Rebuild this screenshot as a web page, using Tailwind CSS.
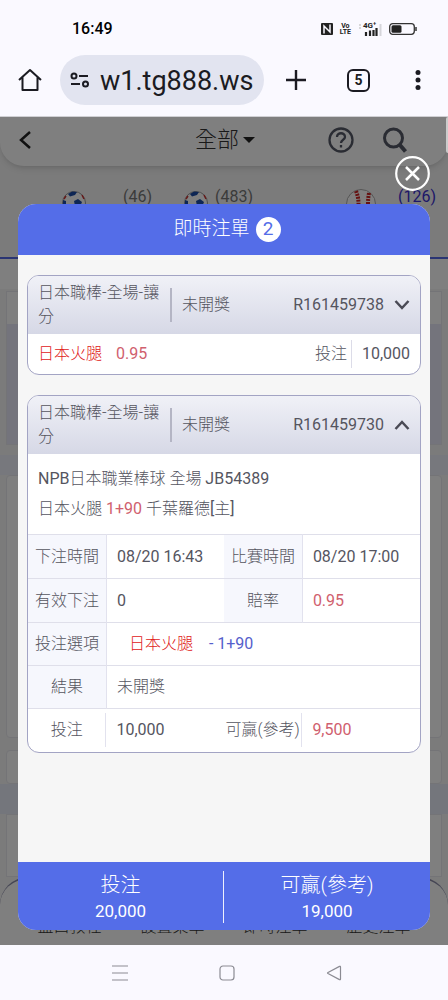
<!DOCTYPE html>
<html lang="zh-Hant">
<head>
  <meta charset="UTF-8">
  <meta name="viewport" content="width=device-width, initial-scale=1.0">
  <title>即時注單</title>
  <script src="https://cdn.jsdelivr.net/npm/@tailwindcss/browser@4"></script>
</head>
<body class="flex flex-col min-h-screen bg-[#faf9ff] text-[#55555f] text-base font-['Roboto','Noto_Sans_CJK_TC',sans-serif]">

  <!-- Status bar -->
  <div class="flex items-center justify-between h-14 pt-0.5 pl-[72px] pr-[31px] text-black">
    <span class="text-base font-medium">16:49</span>
    <div class="flex items-center gap-[7px]">
      <svg class="w-3 h-3" viewBox="0 0 12 12"><rect width="12" height="12" rx="1" fill="#222"/><path d="M3 10.500V3l6 6V1.500" fill="none" stroke="#faf9ff" stroke-width="1.500"/></svg>
      <span class="text-[7px] leading-[6px] font-bold text-center text-[#222]">Vo<br>LTE</span>
      <svg class="w-6 h-4" viewBox="0 0 24 16">
        <path d="M1 4h2M1 7h2" stroke="#ccc" stroke-width="1.500"/>
        <text x="5" y="7" font-size="8" font-weight="700" fill="#222">4G⁺</text>
        <path d="M8 15v-4M12 15V9.500M15.500 15V9M18.500 15V7" stroke="#222" stroke-width="2.200"/>
        <path d="M22.500 15V3" stroke="#d5d5da" stroke-width="2"/>
      </svg>
      <svg class="w-7 h-3" viewBox="0 0 28 12"><rect x=".7" y=".7" width="24.600" height="10.600" rx="3" fill="none" stroke="#333" stroke-width="1.300"/><rect x="2.500" y="2.300" width="10" height="7.400" rx="1.500" fill="#222"/><path d="M27 4v4" stroke="#333" stroke-width="1.500"/></svg>
    </div>
  </div>

  <!-- Browser bar -->
  <div class="flex items-center h-[60px] pb-3 px-[18px] text-[#1b1b22]">
    <button aria-label="Home" class="w-6 h-6 shrink-0">
      <svg viewBox="0 0 24 24" fill="none" stroke="currentColor" stroke-width="2"><path d="M1 12 12 2l11 10M4.500 9.500V22h15V9.500" stroke-linejoin="round"/></svg>
    </button>
    <div class="flex items-center flex-1 min-w-0 h-[50px] ml-[18px] pl-2.5 pr-1 gap-2.5 rounded-full bg-[#e2e4f0]">
      <svg class="w-5 h-5 shrink-0" viewBox="0 0 20 20" fill="none" stroke="currentColor" stroke-width="2"><circle cx="4" cy="6" r="2.500"/><path d="M9 6h9M1 14h9"/><circle cx="15.500" cy="14" r="2.500"/></svg>
      <input aria-label="Address" value="w1.tg888.ws" class="w-full min-w-0 pt-0.5 text-[27px] outline-none">
    </div>
    <button aria-label="New tab" class="ml-5 w-6 h-6 shrink-0">
      <svg viewBox="0 0 24 24" stroke="currentColor" stroke-width="2.400"><path d="M12 2v20M2 12h20"/></svg>
    </button>
    <button class="ml-[39px] w-[23px] h-[23px] shrink-0 rounded-md border-2 border-current text-sm leading-none font-bold">5</button>
    <button aria-label="Menu" class="ml-9 w-6 h-6 shrink-0">
      <svg viewBox="0 0 24 24" fill="currentColor"><circle cx="12" cy="4.500" r="2.500"/><circle cx="12" cy="12" r="2.500"/><circle cx="12" cy="19.500" r="2.500"/></svg>
    </button>
  </div>

  <main class="relative flex flex-col flex-1 overflow-hidden bg-[#f6f6f6] border-t border-[#d0d0d4]">
    <header class="flex items-center h-[49px] pb-1 pl-[18px] pr-10 bg-white rounded-b-3xl shadow-md">
      <button aria-label="返回" class="w-4 h-6">
        <svg viewBox="0 0 16 24" fill="none" stroke="#222" stroke-width="2.500"><path d="m12 4-9 8 9 8"/></svg>
      </button>
      <button class="flex items-center gap-1 ml-auto font-light text-[22px] text-[#333]">全部
        <svg class="w-3 h-2" viewBox="0 0 12 8"><path d="M0 1h12L6 7z" fill="#222"/></svg>
      </button>
      <button aria-label="說明" class="w-[26px] h-[26px] ml-[73px]">
        <svg viewBox="0 0 26 26" fill="none" stroke="#555866" stroke-width="2.300"><circle cx="13" cy="13" r="11.500"/><path d="M9 10c0-5 8-5 8 0 0 3-4 2.500-4 6M13 18v2.500"/></svg>
      </button>
      <button aria-label="搜尋" class="w-[26px] h-[26px] ml-7">
        <svg viewBox="0 0 26 26" fill="none" stroke="#555866" stroke-width="3"><circle cx="11.500" cy="11" r="9"/><path d="m17.500 17.500 6 7" stroke-width="4"/></svg>
      </button>
    </header>

    <!-- Sport tabs -->
    <div class="flex h-[93px] pl-[62px] pr-3 pt-[19px] border-b-2 border-[#5569e6] text-[#777] text-base">
      <div class="flex items-start gap-[37px]">
        <svg class="w-6 h-6 mt-1.5" viewBox="0 0 24 24"><circle cx="12" cy="12" r="11.500" fill="#fff" stroke="#999"/><path d="m6 3 4-2.500 5 .5-2 3-5 1.500zM12 10l4-2 4 3-2 5-5-1zM1 9l3 1v5l-3-1z" fill="#1d4da8"/><path d="m20 4 2 4M2 8l2-3" stroke="#c33" stroke-width="1.500" fill="none"/></svg>
        <span>(46)</span>
      </div>
      <div class="flex items-start gap-[7px] ml-8">
        <svg class="w-6 h-6 mt-1.5" viewBox="0 0 24 24"><circle cx="12" cy="12" r="11.500" fill="#fff" stroke="#999"/><path d="m6 3 4-2.500 5 .5-2 3-5 1.500zM12 10l4-2 4 3-2 5-5-1zM1 9l3 1v5l-3-1z" fill="#1d4da8"/><path d="m20 4 2 4M2 8l2-3" stroke="#c33" stroke-width="1.500" fill="none"/></svg>
        <span>(483)</span>
      </div>
      <div class="flex items-start gap-[22px] ml-auto text-[#3a2fd0]">
        <svg class="w-[30px] h-[30px] mt-1" viewBox="0 0 30 30"><circle cx="15" cy="15" r="14.500" fill="#fff" stroke="#aaa"/><path d="M10 2q5 12 0 26M23 4q-2 11 0 22" fill="none" stroke="#c22" stroke-width="4" stroke-dasharray="2 1"/></svg>
        <span>(126)</span>
      </div>
    </div>

    <!-- Match list -->
    <div class="h-[30px] bg-white"></div>
    <div class="mx-1.5 mt-0.5 pt-8 bg-white border border-[#e8e8ee]"><div class="h-[120px] bg-[#e9e9f8]"></div></div>
    <div class="h-5 mt-2.5 bg-[#eef0fa]"></div>
    <div class="mx-1.5 h-[263px] bg-white border border-[#e8e8ee] rounded"></div>
    <div class="mx-1.5 mt-3 h-[34px] bg-white border border-[#e8e8ee] rounded"></div>
    <div class="h-[30px] bg-[#e8ecf8]"></div>
    <div class="mx-1.5 flex-1 bg-white border border-[#e8e8ee]"></div>

    <nav class="grid grid-cols-4 px-[18px] pt-9 h-[68px] bg-white border-t-2 border-[#8a8ba8] rounded-t-[28px] text-center font-light text-base text-[#333]">
      <a href="#">盤口教程</a>
      <a href="#">設置菜單</a>
      <a href="#">即時注單</a>
      <a href="#">歷史注單</a>
    </nav>

    <div class="absolute inset-0 bg-black/50"></div>
    <div class="absolute top-0 right-0 w-0.5 h-9 rounded-l-full bg-white/60"></div>

    <!-- Bet slip dialog -->
    <section role="dialog" aria-label="即時注單" class="absolute inset-x-[18px] top-[87px] bottom-[15px] flex flex-col overflow-hidden rounded-[18px] bg-[#f6f6f6]">
      <div class="flex items-center justify-center gap-1.5 h-[51px] pl-1.5 bg-[#546de8] text-white">
        <h1 class="text-[19px] font-light">即時注單</h1>
        <span class="flex items-center justify-center w-[25px] h-[25px] rounded-full bg-white text-[#546de8] text-[19px]">2</span>
      </div>

      <div class="flex-1 flex flex-col gap-5 px-[9px] pt-5">
        <article class="overflow-hidden rounded-xl border border-[#a3a4c4] bg-white">
          <div class="flex items-center h-[58px] px-2.5 bg-linear-to-b from-[#f0f1f7] to-[#d6d8e6]">
            <h2 class="w-[132px] font-light leading-6">日本職棒-全場-讓分</h2>
            <span class="w-0.5 h-[34px] bg-[#b4b5c4]"></span>
            <span class="ml-2.5 font-light">未開獎</span>
            <span class="ml-auto">R161459738</span>
            <button aria-label="展開" class="w-4 h-4 ml-2.5">
              <svg viewBox="0 0 16 16" fill="none" stroke="#4a4a55" stroke-width="2.500"><path d="m1.500 4 6.500 7 6.500-7"/></svg>
            </button>
          </div>
          <div class="flex items-center h-10 px-2.5">
            <span class="font-light text-[#e02020]">日本火腿</span>
            <span class="ml-3.5 text-[#d0606e]">0.95</span>
            <span class="ml-auto font-light">投注</span>
            <span class="w-px h-7 ml-1 mr-2.5 bg-[#dcdce8]"></span>
            <span>10,000</span>
          </div>
        </article>

        <article class="overflow-hidden rounded-xl border border-[#a3a4c4] bg-white">
          <div class="flex items-center h-[58px] px-2.5 bg-linear-to-b from-[#f0f1f7] to-[#d6d8e6]">
            <h2 class="w-[132px] font-light leading-6">日本職棒-全場-讓分</h2>
            <span class="w-0.5 h-[34px] bg-[#b4b5c4]"></span>
            <span class="ml-2.5 font-light">未開獎</span>
            <span class="ml-auto">R161459730</span>
            <button aria-label="收合" class="w-4 h-4 ml-2.5">
              <svg viewBox="0 0 16 16" fill="none" stroke="#4a4a55" stroke-width="2.500"><path d="m1.500 12 6.500-7 6.500 7"/></svg>
            </button>
          </div>
          <div class="px-2.5 py-2.5 leading-[30px]">
            <p>NPB<span class="font-light">日本職業棒球 全場</span> JB54389</p>
            <p><span class="font-light">日本火腿</span> <span class="text-[#d0606e]">1+90</span> <span class="font-light">千葉羅德</span>[<span class="font-light">主</span>]</p>
          </div>
          <table class="w-full table-fixed border-collapse">
            <colgroup><col class="w-1/5"><col class="w-3/10"><col class="w-1/5"><col class="w-3/10"></colgroup>
            <tbody>
              <tr class="h-11 border-t border-[#dfdfea]">
                <th class="font-light bg-[#f6f7fd] border-r border-[#e2e2ee] whitespace-nowrap">下注時間</th>
                <td class="pl-2.5">08/20 16:43</td>
                <th class="font-light bg-[#f6f7fd] border-r border-[#e2e2ee] whitespace-nowrap">比賽時間</th>
                <td class="pl-2.5">08/20 17:00</td>
              </tr>
              <tr class="h-11 border-t border-[#dfdfea]">
                <th class="font-light bg-[#f6f7fd] border-r border-[#e2e2ee] whitespace-nowrap">有效下注</th>
                <td class="pl-2.5">0</td>
                <th class="font-light bg-[#f6f7fd] border-r border-[#e2e2ee]">賠率</th>
                <td class="pl-2.5 text-[#d0606e]">0.95</td>
              </tr>
              <tr class="h-[43px] border-t border-[#dfdfea]">
                <th class="font-light bg-[#f6f7fd] border-r border-[#e2e2ee] whitespace-nowrap">投注選項</th>
                <td colspan="3" class="pl-[22px]"><span class="font-light text-[#e02020]">日本火腿</span><span class="ml-4 text-[#5560cc]">- 1+90</span></td>
              </tr>
              <tr class="h-[43px] border-t border-[#dfdfea]">
                <th class="font-light bg-[#f6f7fd] border-r border-[#e2e2ee]">結果</th>
                <td colspan="3" class="pl-2.5 font-light">未開獎</td>
              </tr>
              <tr class="h-[43px] border-t border-[#dfdfea]">
                <th class="p-0 font-light"><div class="leading-[34px] border-r border-[#e2e2ee]">投注</div></th>
                <td class="pl-2.5">10,000</td>
                <th class="p-0 font-light whitespace-nowrap"><div class="leading-[34px] border-r border-[#e2e2ee]">可贏(參考)</div></th>
                <td class="pl-2.5 text-[#d0606e]">9,500</td>
              </tr>
            </tbody>
          </table>
        </article>
      </div>

      <div class="grid grid-cols-2 pt-[9px] pb-[7px] bg-[#546de8] text-white text-center">
        <div class="border-r border-white/90">
          <p class="text-xl leading-7 font-light">投注</p>
          <p class="text-[17px] leading-6">20,000</p>
        </div>
        <div>
          <p class="text-xl leading-7 font-light">可贏(參考)</p>
          <p class="text-[17px] leading-6">19,000</p>
        </div>
      </div>
    </section>

    <button aria-label="關閉" class="absolute top-[39px] right-[18px] w-[35px] h-[35px]">
      <svg viewBox="0 0 35 35" fill="none" stroke="#fff" stroke-width="2.200"><circle cx="17.500" cy="17.500" r="16.300"/><path d="m11 11 13 13M24 11 11 24" stroke-width="2.500"/></svg>
    </button>
  </main>

  <!-- System navigation -->
  <div class="flex items-center justify-center gap-[91px] h-[55px] pl-1.5 text-[#8b8b93]">
    <button aria-label="Recents" class="w-4 h-4"><svg viewBox="0 0 16 16" stroke="currentColor" stroke-width="1.200"><path d="M0 1h16M0 8h16M0 15h16"/></svg></button>
    <button aria-label="Home screen" class="w-4 h-4"><svg viewBox="0 0 16 16" fill="none" stroke="currentColor" stroke-width="1.200"><rect x="1" y="1" width="14" height="14" rx="3"/></svg></button>
    <button aria-label="Back" class="w-4 h-4"><svg viewBox="0 0 16 16" fill="none" stroke="currentColor" stroke-width="1.200"><path d="M14.500 2v12q0 1-1 .6L2 8.600q-1-.6 0-1.200l11.500-6q1-.4 1 .6z"/></svg></button>
  </div>
</body>
</html>
